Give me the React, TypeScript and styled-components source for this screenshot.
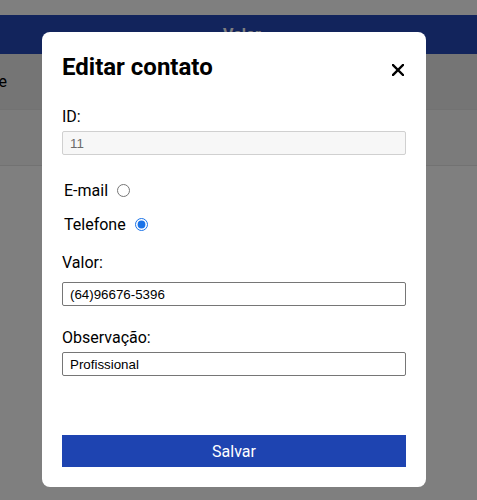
import React from "react";
import styled, { createGlobalStyle } from "styled-components";

const Global = createGlobalStyle`
  html, body { margin: 0; padding: 0; background: #ffffff; }
  body { font-family: Roboto, "Noto Sans", sans-serif; color: #000; overflow: hidden; }
  * { box-sizing: border-box; }
`;

const Page = styled.div`
  padding-top: 15px;
  width: 477px;
  height: 500px;
  overflow: hidden;
`;

const Table = styled.div`
  display: grid;
  grid-template-columns: 140px 1fr;
  margin-left: -133px;
  width: 610px;
`;

const HeadCell = styled.div`
  background: #2448b8;
  color: #ffffff;
  height: 39px;
  display: flex;
  align-items: center;
  justify-content: center;
  font-size: 16px;
  font-weight: 700;
`;

const Cell = styled.div<{ $shade: string }>`
  background: ${(p) => p.$shade};
  height: 56px;
  display: flex;
  align-items: center;
  justify-content: flex-end;
  font-size: 16px;
  border-bottom: 1px solid #e4e4e4;
`;

const Overlay = styled.div`
  position: fixed;
  inset: 0;
  background: rgba(0, 0, 0, 0.5);
  display: flex;
  align-items: flex-start;
  padding: 32px 0 0 42px;
`;

const Modal = styled.div`
  width: 384px;
  height: 455px;
  background: #ffffff;
  border-radius: 8px;
  padding: 21px 20px 20px 20px;
  display: flex;
  flex-direction: column;
`;

const Header = styled.div`
  display: flex;
  align-items: center;
  justify-content: space-between;
  margin-bottom: 26px;
`;

const Title = styled.h2`
  margin: 0;
  font-size: 24px;
  font-weight: 700;
  line-height: 28px;
`;

const Close = styled.button`
  border: none;
  background: none;
  padding: 0;
  width: 12px;
  height: 12px;
  margin: 6px 2px 0 0;
  display: flex;
`;

const Field = styled.div<{ $gap?: number; $top?: number }>`
  display: flex;
  flex-direction: column;
  margin-top: ${(p) => p.$top ?? 0}px;
  margin-bottom: ${(p) => p.$gap ?? 0}px;
`;

const Label = styled.label<{ $space?: number }>`
  font-size: 16px;
  line-height: 19px;
  margin-bottom: ${(p) => p.$space ?? 5}px;
`;

const Input = styled.input<{ $readonly?: boolean }>`
  width: 344px;
  height: 24px;
  border: 1px solid ${(p) => (p.$readonly ? "#d0d0d0" : "#767676")};
  background: ${(p) => (p.$readonly ? "#f7f7f7" : "#ffffff")};
  color: ${(p) => (p.$readonly ? "#6b6b6b" : "#000000")};
  border-radius: 2px;
  padding: 0 7px;
  font-family: "Liberation Sans", Arial, sans-serif;
  font-size: 13.33px;
  outline: none;
`;

const RadioRow = styled.label`
  display: flex;
  align-items: center;
  font-size: 16px;
  line-height: 19px;
  margin-left: 2px;
  height: 19px;
  margin-bottom: 15px;
`;

const Radio = styled.input`
  margin: 0 0 0 9px;
  width: 13px;
  height: 13px;
  accent-color: #1a73e8;
`;

const Spacer = styled.div`
  flex: 1;
`;

const SaveButton = styled.button`
  width: 344px;
  height: 32px;
  border: none;
  background: #1e44b1;
  color: #ffffff;
  font-family: Roboto, sans-serif;
  font-size: 16px;
`;

export default function App() {
  return (
    <>
      <Global />
      <Page>
        <Table>
          <HeadCell>Tipo</HeadCell>
          <HeadCell>Valor</HeadCell>
          <Cell $shade="#ebebeb">Telefone</Cell>
          <Cell $shade="#ebebeb" />
          <Cell $shade="#f6f6f6" />
          <Cell $shade="#f6f6f6" />
        </Table>
      </Page>
      <Overlay>
        <Modal>
          <Header>
            <Title>Editar contato</Title>
            <Close aria-label="Fechar">
              <svg width="12" height="12" viewBox="0 0 12 12">
                <path d="M1 1 L11 11 M11 1 L1 11" stroke="#000" strokeWidth="2.4" strokeLinecap="square" />
              </svg>
            </Close>
          </Header>
          <Field $gap={26}>
            <Label>ID:</Label>
            <Input $readonly readOnly value="11" />
          </Field>
          <RadioRow>
            E-mail
            <Radio type="radio" name="tipo" />
          </RadioRow>
          <RadioRow>
            Telefone
            <Radio type="radio" name="tipo" defaultChecked />
          </RadioRow>
          <Field $top={4} $gap={22}>
            <Label $space={10}>Valor:</Label>
            <Input defaultValue="(64)96676-5396" />
          </Field>
          <Field>
            <Label>Observação:</Label>
            <Input defaultValue="Profissional" />
          </Field>
          <Spacer />
          <SaveButton>Salvar</SaveButton>
        </Modal>
      </Overlay>
    </>
  );
}
